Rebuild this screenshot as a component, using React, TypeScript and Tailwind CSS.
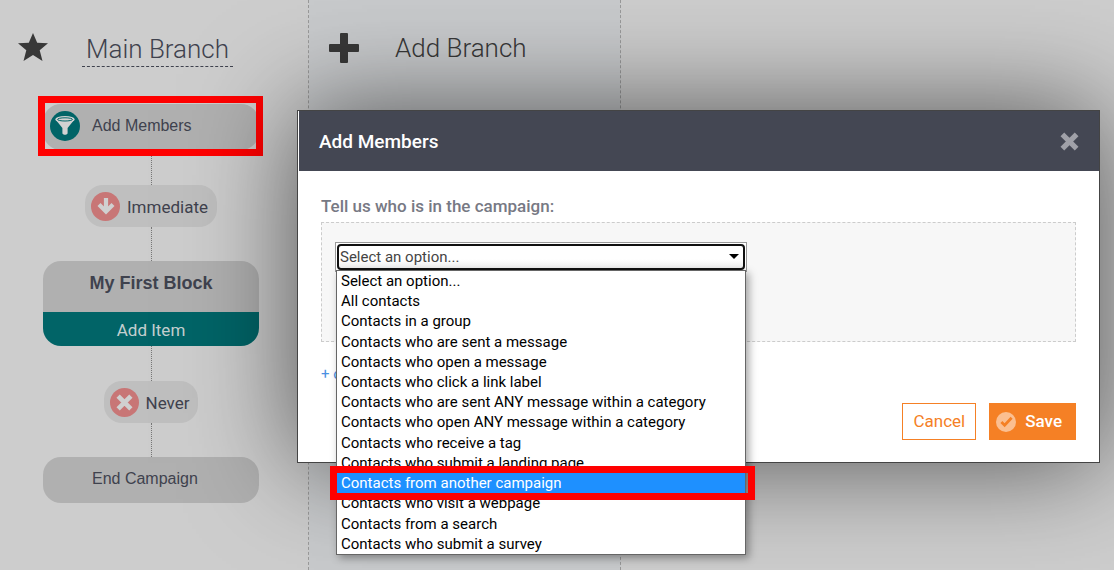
import React from 'react';

const options = [
    'Select an option...',
    'All contacts',
    'Contacts in a group',
    'Contacts who are sent a message',
    'Contacts who open a message',
    'Contacts who click a link label',
    'Contacts who are sent ANY message within a category',
    'Contacts who open ANY message within a category',
    'Contacts who receive a tag',
    'Contacts who submit a landing page',
    'Contacts from another campaign',
    'Contacts who visit a webpage',
    'Contacts from a search',
    'Contacts who submit a survey',
];

const highlighted = 'Contacts from another campaign';

interface IconProps {
    className?: string;
}

const StarIcon: React.FC<IconProps> = ({ className }) => (
    <svg viewBox="0 0 30 28" fill="currentColor" className={className} aria-hidden="true">
        <path d="M15 0l4.200 9.700L30 10.300l-8.300 6.900L24.500 28 15 21.900 5.500 28l2.800-10.800L0 10.300l10.800-.6z" />
    </svg>
);

const PlusIcon: React.FC<IconProps> = ({ className }) => (
    <svg viewBox="0 0 30 30" fill="currentColor" className={className} aria-hidden="true">
        <rect x="11" width="8" height="30" rx="1" />
        <rect y="11" width="30" height="8" rx="1" />
    </svg>
);

const CrossIcon: React.FC<IconProps> = ({ className }) => (
    <svg viewBox="0 0 20 20" fill="none" stroke="currentColor" strokeWidth="5.500" className={className} aria-hidden="true">
        <path d="M2.500 2.500l15 15M17.500 2.500l-15 15" />
    </svg>
);

const ArrowDownIcon: React.FC<IconProps> = ({ className }) => (
    <svg viewBox="0 0 18 18" fill="none" stroke="currentColor" strokeWidth="4.200" className={className} aria-hidden="true">
        <path d="M9 1v13M2 7.500l7 7 7-7" />
    </svg>
);

const CheckIcon: React.FC<IconProps> = ({ className }) => (
    <svg viewBox="0 0 14 14" fill="none" stroke="currentColor" strokeWidth="3" className={className} aria-hidden="true">
        <path d="M1.500 7.500L5 11l7.500-8" />
    </svg>
);

const FunnelIcon: React.FC<IconProps> = ({ className }) => (
    <svg viewBox="0 0 20 20" fill="#d2d2d2" className={className} aria-hidden="true">
        <path d="M.5 3.400L7.400 12v5.500c1.200 1.700 4 1.700 5.200 0V12l6.900-8.600z" />
        <ellipse cx="10" cy="3.400" rx="9.700" ry="3.300" />
        <ellipse cx="10" cy="3.400" rx="7.500" ry="1.600" fill="#d2d2d2" stroke="#016467" />
    </svg>
);

const Connector: React.FC<{ tall?: boolean }> = ({ tall }) => (
    <div className={`border-l border-dotted border-[#777] ${tall ? 'h-[35px]' : 'h-[34px]'}`} />
);

interface DelayPillProps {
    label: string;
    icon: React.ReactNode;
}

const DelayPill: React.FC<DelayPillProps> = ({ label, icon }) => (
    <button className="flex h-[42px] items-center gap-[7px] rounded-[18px] bg-[#bfbfbf] pr-[9px] pl-[6px] text-[17px] text-[#3f424e]">
        <span className="flex h-[29px] w-[29px] items-center justify-center rounded-full bg-[#c87676] text-[#d0d0d0]">{icon}</span>
        <span className="pt-[3px]">{label}</span>
    </button>
);

const MainBranch: React.FC = () => (
    <section className="w-[309px] shrink-0 border-r border-dashed border-[#999]">
        <header className="flex h-[104px] items-start pt-[33px] pl-[18px]">
            <StarIcon className="h-[28px] w-[30px] text-[#383838]" />
            <h2 className="ml-[34px] border-b border-dashed border-[#3f424e] px-1 text-[26px] leading-[33px] font-light text-[#3f424e]">Main Branch</h2>
        </header>
        <div className="ml-[43px] flex w-[216px] flex-col items-center">
            <div className="relative w-full">
                <button className="flex h-[46px] w-full items-center gap-[12px] rounded-[18px] bg-[#b0b0b0] pb-[3px] pl-[7px] font-['Liberation_Sans',sans-serif] text-base text-[#3f424e]">
                    <span className="flex h-[30px] w-[30px] items-center justify-center rounded-full bg-[#016467]">
                        <FunnelIcon className="h-5 w-5" />
                    </span>
                    Add Members
                </button>
                <div className="absolute -top-[8px] -right-[4px] -bottom-[6px] -left-[5px] border-[7px] border-[#f00]" />
            </div>
            <Connector tall />
            <DelayPill label="Immediate" icon={<ArrowDownIcon className="h-[18px] w-[18px]" />} />
            <Connector />
            <div className="w-full overflow-hidden rounded-[18px]">
                <h3 className="h-[51px] bg-[#b0b0b0] pt-[10px] text-center font-['Liberation_Sans',sans-serif] text-lg leading-6 font-bold text-[#3f424e]">My First Block</h3>
                <button className="h-[34px] w-full bg-[#016467] pt-[3px] text-[17px] text-[#c4cfcf]">Add Item</button>
            </div>
            <Connector tall />
            <DelayPill label="Never" icon={<CrossIcon className="h-[17px] w-[17px]" />} />
            <Connector />
            <button className="h-[46px] w-full rounded-[18px] bg-[#b0b0b0] pb-[3px] pl-[49px] text-left font-['Liberation_Sans',sans-serif] text-base text-[#3f424e]">End Campaign</button>
        </div>
    </section>
);

const AddBranch: React.FC = () => (
    <section className="w-[312px] shrink-0 border-r border-dashed border-[#999] bg-[#c8cacc]">
        <button className="mt-[30px] ml-[20px] flex h-[36px] items-center gap-[36px] text-[26px] font-light text-[#383838]">
            <PlusIcon className="h-[30px] w-[30px]" />
            Add Branch
        </button>
    </section>
);

const MemberSource: React.FC = () => (
    <div className="relative w-[412px]">
        <div className="border border-[#999] bg-white p-px">
            <select
                aria-label="Member source"
                className="block h-[26px] w-full appearance-none rounded-[4px] border-2 border-[#101010] bg-linear-to-b from-white from-60% to-[#eee] pl-px text-[15px] leading-none text-[#444] outline-none"
            >
                {options.map((option) => <option key={option}>{option}</option>)}
            </select>
        </div>
        <svg viewBox="0 0 10 5" className="pointer-events-none absolute top-[12px] right-[8px] h-[5px] w-[10px]" aria-hidden="true">
            <path d="M0 0h10L5 5z" />
        </svg>
        <ul role="listbox" aria-label="Member source options" className="absolute top-[28px] right-px left-px grid h-[285px] auto-rows-fr border border-[#666] bg-white text-[15px] leading-[21px] text-black shadow-[3px_3px_8px_rgba(0,0,0,0.35)]">
            {options.map((option) => (
                <li
                    key={option}
                    role="option"
                    aria-selected={option === highlighted}
                    className={option === highlighted ? 'relative bg-[#1e90ff] pl-[4px] text-white' : 'pl-[4px]'}
                >
                    {option}
                    {option === highlighted && <span className="absolute -top-[7px] -right-[10px] -bottom-[7px] -left-[7px] border-[7px] border-[#f00]" />}
                </li>
            ))}
        </ul>
    </div>
);

const AddMembersDialog: React.FC = () => (
    <div role="dialog" aria-labelledby="dialog-title" className="border border-[#444] bg-white shadow-[0_0_100px_rgba(0,0,0,0.6)]">
        <header className="flex h-[60px] items-center justify-between border-l border-white bg-[#444753] px-5">
            <h1 id="dialog-title" className="pt-[3px] text-[19px] font-medium text-white">Add Members</h1>
            <button aria-label="Close" className="text-[#a0a1a8]"><CrossIcon className="h-[19px] w-[19px]" /></button>
        </header>
        <div className="px-[23px] pt-[24px] pb-[22px]">
            <h2 className="text-[17px] leading-[22px] font-medium text-[#777984]">Tell us who is in the campaign:</h2>
            <div className="mt-[5px] h-[120px] border border-dashed border-[#ccc] bg-[#f7f7f7] pt-[19px] pl-[13px]">
                <MemberSource />
            </div>
            <a href="#" className="mt-[22px] block text-[15px] leading-5 text-[#4a90e2]">+ o</a>
            <div className="mt-[19px] flex justify-end gap-[13px] text-[17px]">
                <button className="h-[37px] border border-[#f58025] px-[10px] text-[#f58025]">Cancel</button>
                <button className="flex h-[37px] items-center gap-[9px] bg-[#f58025] pr-[14px] pl-[7px] font-medium text-white">
                    <span className="flex h-5 w-5 items-center justify-center rounded-full bg-[#fbbf91] text-[#f58025]"><CheckIcon className="h-[13px] w-[13px]" /></span>
                    Save
                </button>
            </div>
        </div>
    </div>
);

const App: React.FC = () => (
    <main className="relative flex min-h-screen overflow-hidden bg-[#cdcdcd] font-[Roboto,sans-serif]">
        <MainBranch />
        <AddBranch />
        <div className="absolute inset-0 pt-[110px] pr-[14px] pl-[297px]">
            <AddMembersDialog />
        </div>
    </main>
);

export default App;
